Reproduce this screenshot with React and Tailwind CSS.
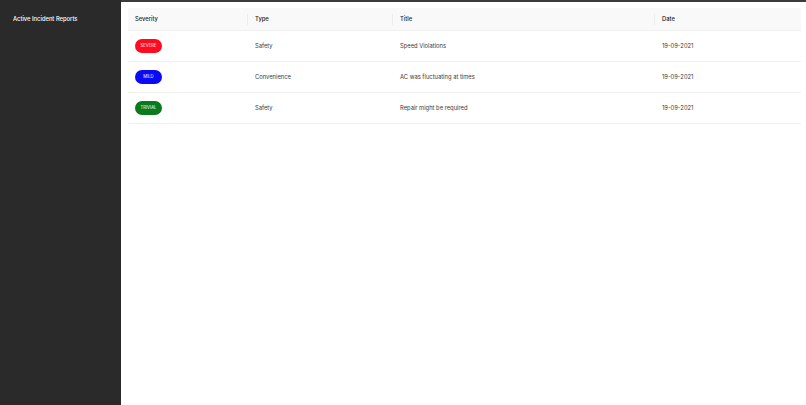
import React from 'react'

const rows = [
  { severity: 'SEVERE', color: 'bg-[#ff0a1e]', type: 'Safety', title: 'Speed Violations', date: '19-09-2021' },
  { severity: 'MILD', color: 'bg-[#0a0af5]', type: 'Convenience', title: 'AC was fluctuating at times', date: '19-09-2021' },
  { severity: 'TRIVIAL', color: 'bg-[#0a7a1e]', type: 'Safety', title: 'Repair might be required', date: '19-09-2021' },
]

const Badge = ({ label, color }) => (
  <span className={`inline-flex h-[14px] w-[27px] items-center justify-center rounded-full pt-px text-[4.2px] text-white ${color}`}>
    {label}
  </span>
)

const Header = ({ children, last }) => (
  <th className="relative h-[22px] px-[7px] pt-px text-left font-medium text-[#222]">
    {children}
    {!last && <span className="absolute right-0 top-[6px] h-[11px] w-px bg-[#ececec]" />}
  </th>
)

const App = () => {
  return (
    <div className="flex h-[405px] w-[806px] font-['Inter',sans-serif]">
      <aside className="w-[121px] shrink-0 bg-[#2a2a2a] px-[13px] pt-[15px] text-[5.8px] font-medium text-white">
        Active Incident Reports
      </aside>
      <main className="flex-1 border-t-2 border-[#3c3c3c] bg-white pl-[7px] pr-[5px] pt-[6px]">
        <table className="w-full border-collapse text-[5.8px]">
          <colgroup>
            <col className="w-[120px]" />
            <col className="w-[145px]" />
            <col className="w-[262px]" />
            <col />
          </colgroup>
          <thead className="bg-[#f9f9f9]">
            <tr className="border-b border-[#f0f0f0]">
              <Header>Severity</Header>
              <Header>Type</Header>
              <Header>Title</Header>
              <Header last>Date</Header>
            </tr>
          </thead>
          <tbody className="text-[#3a3a3a]">
            {rows.map((r) => (
              <tr key={r.title} className="h-[31px] border-b border-[#f0f0f0]">
                <td className="px-[7px]">
                  <Badge label={r.severity} color={r.color} />
                </td>
                <td className="px-[7px] pt-[2px]">{r.type}</td>
                <td className="px-[7px] pt-[2px]">{r.title}</td>
                <td className="px-[7px] pt-[2px]">{r.date}</td>
              </tr>
            ))}
          </tbody>
        </table>
      </main>
    </div>
  )
}

export default App
